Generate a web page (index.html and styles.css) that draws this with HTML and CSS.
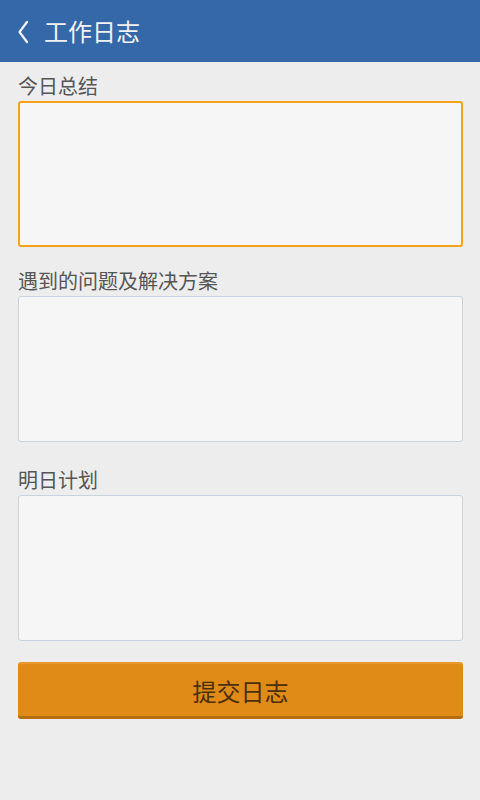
FILE: index.html
```html
<!DOCTYPE html>
<html lang="zh">
<head>
<meta charset="utf-8">
<link rel="stylesheet" href="styles.css">
</head>
<body>
<header class="bar">
  <svg class="back" width="12" height="26" viewBox="0 0 12 26"><path d="M10 3 L2.5 13 L10 23" fill="none" stroke="#f2f2f2" stroke-width="2.2" stroke-linecap="round" stroke-linejoin="round"/></svg>
  <span class="title">工作日志</span>
</header>
<main class="form">
  <label class="label first">今日总结</label>
  <div class="box focus"></div>
  <label class="label">遇到的问题及解决方案</label>
  <div class="box"></div>
  <label class="label third">明日计划</label>
  <div class="box"></div>
  <div class="btn">提交日志</div>
</main>
</body>
</html>
```
FILE: styles.css
```css
html, body { margin: 0; padding: 0; }
body {
  width: 480px; height: 800px;
  background: #ededed;
  font-family: "Noto Sans CJK SC", "Noto Sans", sans-serif;
  overflow: hidden;
}
.bar {
  height: 62px;
  background: #3568a8;
  display: flex;
  align-items: center;
  padding-left: 17px;
  box-sizing: border-box;
}
.back { margin-right: 15px; margin-top: 1px; }
.title { color: #f2f2f2; font-size: 24px; line-height: 30px; }
.form {
  display: flex;
  flex-direction: column;
  padding: 0 17px 0 18px;
}
.label {
  display: block;
  font-size: 20px;
  line-height: 26px;
  padding-bottom: 2px;
  color: #555555;
  margin-top: 21px;
}
.label.first { margin-top: 11px; }
.label.third { margin-top: 25px; }
.box {
  height: 146px;
  box-sizing: border-box;
  background: #f6f6f6;
  border: 1px solid #c8d3e0;
  border-radius: 3px;
}
.box.focus { border: 2px solid #f3a31c; }
.btn {
  margin-top: 21px;
  height: 57px;
  box-sizing: border-box;
  background: #e08a18;
  border-top: 2px solid #e89a30;
  border-bottom: 3px solid #b56d10;
  border-radius: 3px;
  display: flex;
  align-items: center;
  justify-content: center;
  color: #4a300c;
  font-size: 24px;
}
```
